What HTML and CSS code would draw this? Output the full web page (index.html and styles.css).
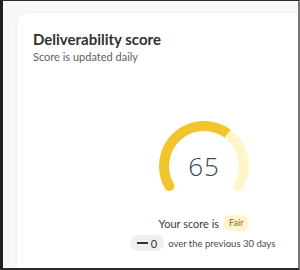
FILE: index.html
```html
<!DOCTYPE html>
<html lang="en">
<head>
    <meta charset="UTF-8">
    <meta name="viewport" content="width=device-width, initial-scale=1.0">
    <title>Deliverability score</title>
    <link rel="stylesheet" href="styles.css">
</head>
<body>
    <div class="frame">
        <div class="card">
            <h2 class="card-title">Deliverability score</h2>
            <p class="card-subtitle">Score is updated daily</p>

            <div class="gauge">
                <svg class="gauge-svg" width="100" height="100" viewBox="0 0 100 100">
                    <path class="gauge-track" d="M15.36 70 A40 40 0 1 1 84.64 70"/>
                    <path class="gauge-fill" d="M15.36 70 A40 40 0 0 1 73.51 17.64"/>
                    <circle class="gauge-cap" cx="15.36" cy="70" r="5"/>
                </svg>
                <span class="gauge-value">65</span>
            </div>

            <div class="score-line">
                Your score is <span class="badge-fair">Fair</span>
            </div>
            <div class="trend-line">
                <span class="trend-pill"><span class="trend-dash"></span>0</span>
                over the previous 30 days
            </div>
        </div>
    </div>
</body>
</html>
```

FILE: styles.css
```css
body {
    margin: 0;
    background-color: #1f1f1f;
    font-family: 'Lato', 'Liberation Sans', sans-serif;
}
.frame {
    width: 300px;
    height: 270px;
    box-sizing: border-box;
    border-top: 1px solid #2a2a2a;
    border-left: 3px solid #1f1f1f;
    border-right: 2px solid #777;
    border-bottom: 2px solid #2a2a2a;
    background-color: #f7f8f9;
    padding: 12px 0 0 14px;
    overflow: hidden;
}
.card {
    width: 374px;
    height: 300px;
    box-sizing: border-box;
    background: white;
    border-radius: 10px 0 0 0;
    box-shadow: 0 0 3px rgba(0, 0, 0, 0.08);
    padding: 17px 16px 0 16px;
    display: flex;
    flex-direction: column;
}
.card-title {
    margin: 0;
    font-size: 15px;
    line-height: 18px;
    font-weight: 700;
    color: #323130;
}
.card-subtitle {
    margin: 2px 0 0 0;
    font-size: 11px;
    line-height: 14px;
    color: #605e5c;
}
.gauge {
    display: grid;
    align-self: center;
    margin-top: 52px;
    width: 100px;
    height: 100px;
}
.gauge-svg, .gauge-value {
    grid-area: 1 / 1;
}
.gauge-track {
    fill: none;
    stroke: #fff5c8;
    stroke-width: 10;
    stroke-linecap: round;
}
.gauge-fill {
    fill: none;
    stroke: #f2c52c;
    stroke-width: 10;
}
.gauge-cap {
    fill: #f2c52c;
}
.gauge-value {
    place-self: center;
    font-family: 'Open Sans', sans-serif;
    font-weight: 300;
    font-size: 26px;
    color: #3c4858;
    letter-spacing: 1px;
}
.score-line {
    align-self: center;
    margin-top: -1px;
    font-size: 11px;
    color: #3b3a39;
    display: flex;
    align-items: center;
    gap: 4px;
}
.badge-fair {
    background-color: #fff4ce;
    color: #8a6a14;
    font-size: 9px;
    border-radius: 8px;
    padding: 2px 6px;
    line-height: 12px;
}
.trend-line {
    align-self: center;
    margin-left: -3px;
    margin-top: 4px;
    font-size: 9.5px;
    color: #4a4a4a;
    display: flex;
    align-items: center;
    gap: 4px;
}
.trend-pill {
    display: flex;
    align-items: center;
    gap: 3px;
    background-color: #edeff1;
    border-radius: 8px;
    padding: 1px 7px;
    height: 14px;
    font-size: 11px;
    color: #323130;
}
.trend-dash {
    width: 11px;
    height: 2px;
    background-color: #323130;
}
```
